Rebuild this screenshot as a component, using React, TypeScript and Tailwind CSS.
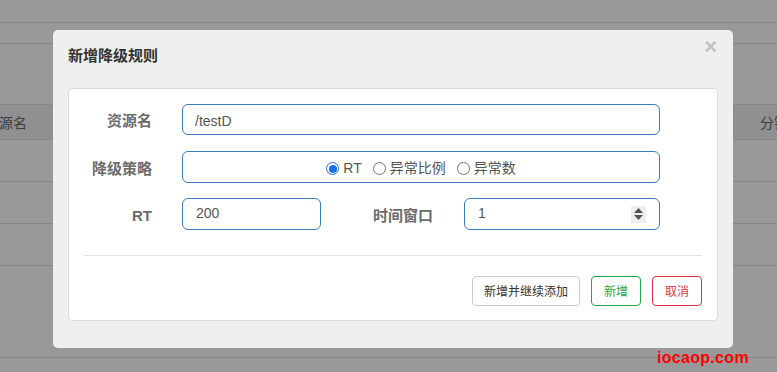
import React from "react";

const font = { fontFamily: '"Liberation Sans", "Noto Sans CJK SC", sans-serif' };

function Radio({ checked, label }: { checked?: boolean; label: string }) {
  return (
    <label className="flex items-center gap-[4px]">
      {checked ? (
        <span className="w-[13px] h-[13px] rounded-full border border-[#1a73e8] flex items-center justify-center">
          <span className="w-[8px] h-[8px] rounded-full bg-[#1a73e8]" />
        </span>
      ) : (
        <span className="w-[13px] h-[13px] rounded-full border border-[#767676] bg-white" />
      )}
      <span className="text-[14px] text-[#555]">{label}</span>
    </label>
  );
}

export default function App() {
  return (
    <div
      className="relative w-[777px] h-[372px] overflow-hidden bg-[#999999]"
      style={font}
    >
      {/* background table */}
      <div className="flex flex-col">
        <div className="h-[23px] border-b border-[#878787]" />
        <div className="h-[21px] border-b border-[#878787]" />
        <div className="h-[61px] border-b border-[#878787]" />
        <div className="h-[35px] border-b border-[#878787] bg-[#8f9092] flex items-center justify-between text-[14px] text-[#3d3d3d] pt-[3px]">
          <span className="-ml-[15px]">资源名</span>
          <span className="-mr-[11px]">分钟</span>
        </div>
        <div className="h-[42px] border-b border-[#878787]" />
        <div className="h-[42px] border-b border-[#878787]" />
        <div className="h-[42px] border-b border-[#878787]" />
        <div className="h-[92px] border-b border-[#878787]" />
      </div>

      {/* modal */}
      <div className="absolute left-[53px] top-[30px] w-[680px] h-[318px] bg-[#efefef] rounded-[5px] px-[15px]">
        <div className="h-[58px] flex items-center justify-between">
          <span className="text-[15px] font-bold text-[#333] -mt-[5px]">新增降级规则</span>
          <span className="text-[22px] font-bold text-[#c2c2c2] leading-none -mt-[24px] mr-[1px]">×</span>
        </div>
        <div className="w-[650px] h-[233px] bg-white border border-[#dddddd] rounded-[4px] pt-[15px]">
          {/* row 1 */}
          <div className="flex items-center h-[31px]">
            <div className="w-[83px] text-right text-[15px] font-bold text-[#6b6b6b] pt-[4px]">资源名</div>
            <div className="ml-[30px] w-[478px] h-[31px] border border-[#3a7cbe] rounded-[6px] flex items-center px-[12px] pt-[3px] text-[14px] text-[#555]">
              /testD
            </div>
          </div>
          {/* row 2 */}
          <div className="flex items-center h-[32px] mt-[16px]">
            <div className="w-[83px] text-right text-[15px] font-bold text-[#6b6b6b] pt-[4px]">降级策略</div>
            <div className="ml-[30px] w-[478px] h-[32px] border border-[#3a7cbe] rounded-[6px] flex items-center justify-center gap-[11px] pt-[3px]">
              <Radio checked label="RT" />
              <Radio label="异常比例" />
              <Radio label="异常数" />
            </div>
          </div>
          {/* row 3 */}
          <div className="flex items-center h-[32px] mt-[15px]">
            <div className="w-[83px] text-right text-[15px] font-bold text-[#6b6b6b] pt-[4px]">RT</div>
            <div className="ml-[30px] w-[139px] h-[32px] border border-[#3a7cbe] rounded-[6px] flex items-center px-[13px] text-[14px] text-[#555]">
              <span className="-mt-[1px]">200</span>
            </div>
            <div className="w-[112px] text-right text-[15px] font-bold text-[#6b6b6b] pt-[4px]">时间窗口</div>
            <div className="ml-[31px] w-[196px] h-[32px] border border-[#3a7cbe] rounded-[6px] flex items-center justify-between pl-[13px] pr-[13px] text-[14px] text-[#555]">
              <span className="-mt-[1px]">1</span>
              <span className="w-[15px] h-[17px] bg-[#eeeeee] flex flex-col items-center justify-center gap-[2px]">
                <svg width="9" height="5" viewBox="0 0 9 5"><path d="M0 5 L4.5 0 L9 5 Z" fill="#555" /></svg>
                <svg width="9" height="5" viewBox="0 0 9 5"><path d="M0 0 L4.5 5 L9 0 Z" fill="#555" /></svg>
              </span>
            </div>
          </div>
          {/* divider */}
          <div className="mx-[15px] mt-[25px] border-t border-[#e3e3e3]" />
          {/* buttons */}
          <div className="flex justify-end gap-[11px] mr-[15px] mt-[20px]">
            <button className="h-[30px] px-[11px] pt-[2px] border border-[#cccccc] rounded-[4px] bg-white text-[12px] text-[#333]">
              新增并继续添加
            </button>
            <button className="h-[30px] w-[50px] pt-[2px] border border-[#28a745] rounded-[4px] bg-white text-[12px] text-[#28a745]">
              新增
            </button>
            <button className="h-[30px] w-[50px] pt-[2px] border border-[#dc3545] rounded-[4px] bg-white text-[12px] text-[#dc3545]">
              取消
            </button>
          </div>
        </div>
      </div>

      {/* watermark */}
      <div className="absolute left-[657px] top-[346px] text-[16px] font-bold text-[#ff0000] tracking-[0.3px]">
        iocaop.com
      </div>
    </div>
  );
}
